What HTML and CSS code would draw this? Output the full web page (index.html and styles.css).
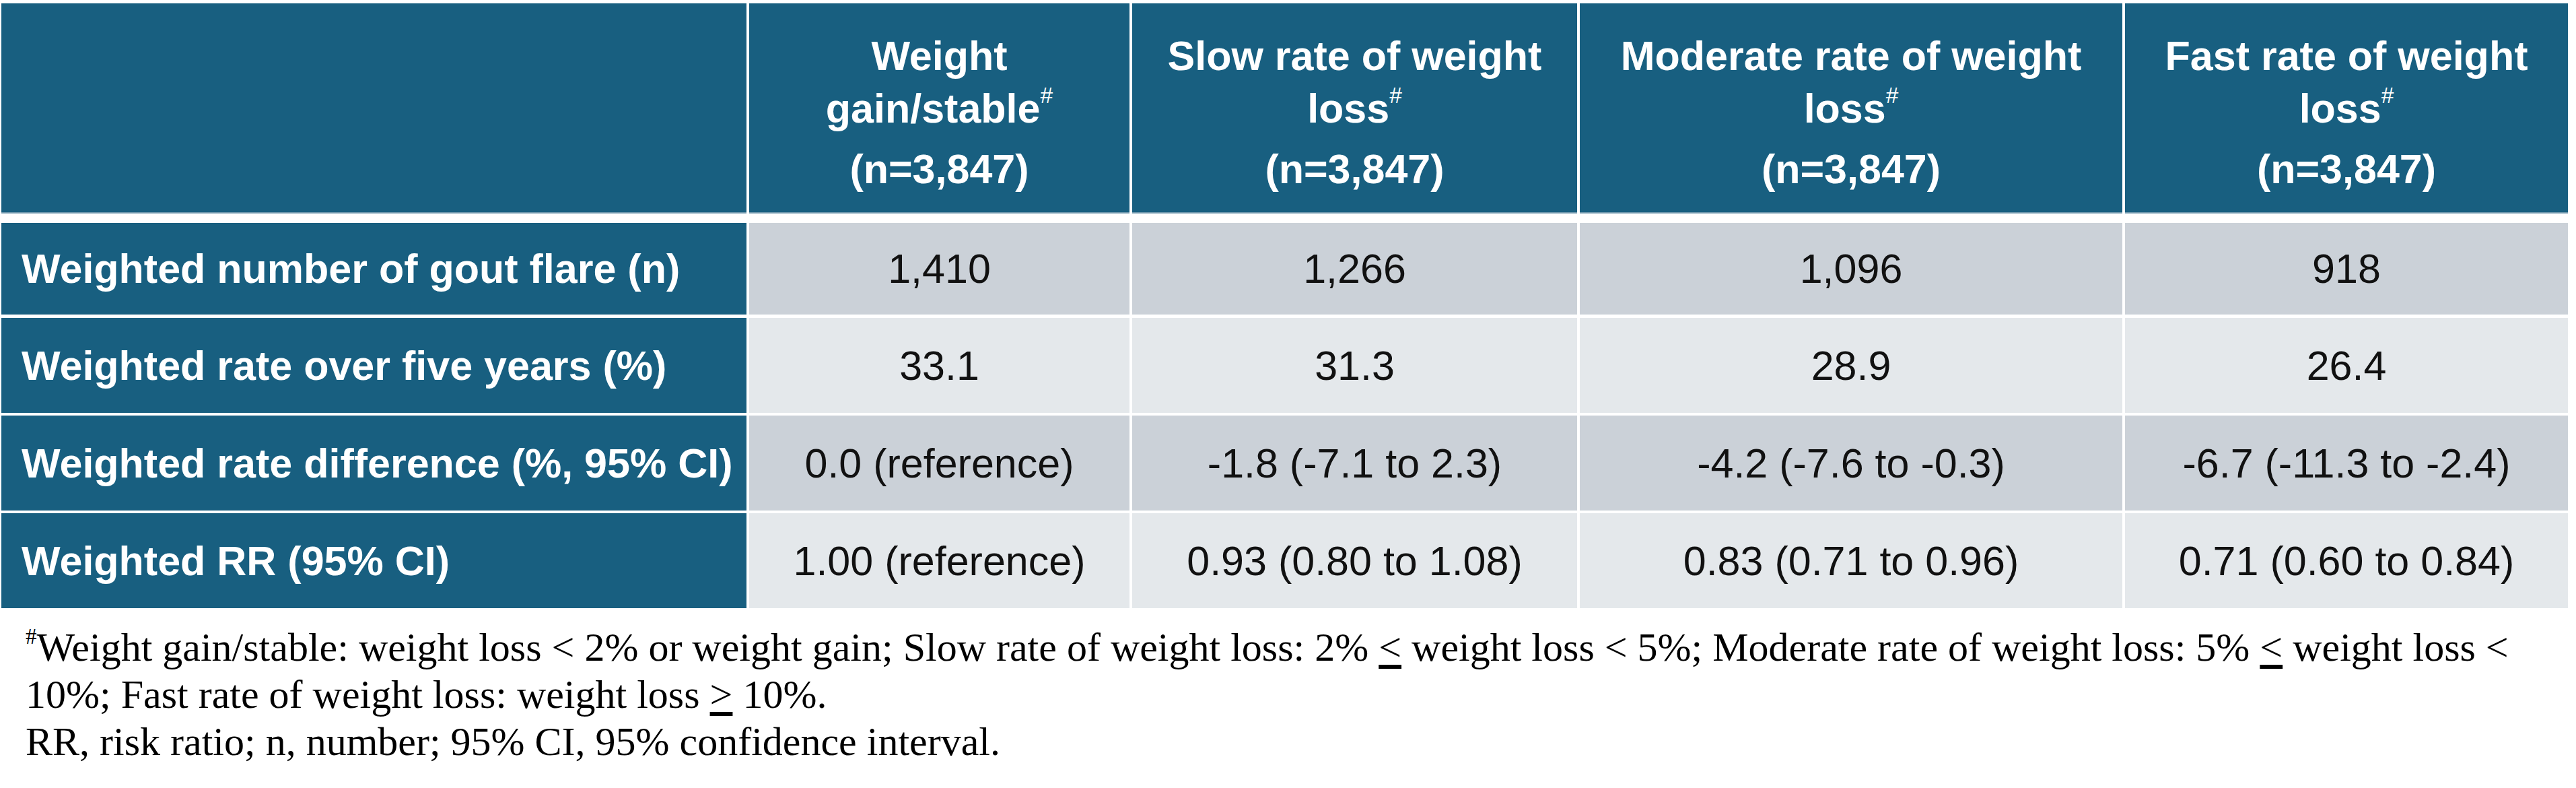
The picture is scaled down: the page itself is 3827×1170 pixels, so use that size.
FILE: index.html
```html
<!DOCTYPE html>
<html lang="en">
<head>
<meta charset="utf-8">
<title>Weighted gout flare by rate of weight loss</title>
<link rel="stylesheet" href="styles.css">
</head>
<body>
<div class="page">
  <div class="table">
    <div class="row head">
      <div class="cell hcell label-col"></div>
      <div class="cell hcell c2"><div class="htitle">Weight<br>gain/stable<sup>#</sup></div><div class="hn">(n=3,847)</div></div>
      <div class="cell hcell c3"><div class="htitle">Slow rate of weight<br>loss<sup>#</sup></div><div class="hn">(n=3,847)</div></div>
      <div class="cell hcell c4"><div class="htitle">Moderate rate of weight<br>loss<sup>#</sup></div><div class="hn">(n=3,847)</div></div>
      <div class="cell hcell c5"><div class="htitle">Fast rate of weight<br>loss<sup>#</sup></div><div class="hn">(n=3,847)</div></div>
    </div>
    <div class="row body dark first">
      <div class="cell label">Weighted number of gout flare (n)</div>
      <div class="cell val">1,410</div>
      <div class="cell val">1,266</div>
      <div class="cell val">1,096</div>
      <div class="cell val">918</div>
    </div>
    <div class="row body light">
      <div class="cell label">Weighted rate over five years (%)</div>
      <div class="cell val">33.1</div>
      <div class="cell val">31.3</div>
      <div class="cell val">28.9</div>
      <div class="cell val">26.4</div>
    </div>
    <div class="row body dark">
      <div class="cell label">Weighted rate difference (%, 95% CI)</div>
      <div class="cell val">0.0 (reference)</div>
      <div class="cell val">-1.8 (-7.1 to 2.3)</div>
      <div class="cell val">-4.2 (-7.6 to -0.3)</div>
      <div class="cell val">-6.7 (-11.3 to -2.4)</div>
    </div>
    <div class="row body light">
      <div class="cell label">Weighted RR (95% CI)</div>
      <div class="cell val">1.00 (reference)</div>
      <div class="cell val">0.93 (0.80 to 1.08)</div>
      <div class="cell val">0.83 (0.71 to 0.96)</div>
      <div class="cell val">0.71 (0.60 to 0.84)</div>
    </div>
  </div>
  <div class="notes">
    <p><sup class="nsup">#</sup>Weight gain/stable: weight loss &lt; 2% or weight gain; Slow rate of weight loss: 2% <span class="ul">&lt;</span> weight loss &lt; 5%; Moderate rate of weight loss: 5% <span class="ul">&lt;</span> weight loss &lt; 10%; Fast rate of weight loss: weight loss <span class="ul">&gt;</span> 10%.</p>
    <p>RR, risk ratio; n, number; 95% CI, 95% confidence interval.</p>
  </div>
</div>
</body>
</html>
```

FILE: styles.css
```css
html, body {
  margin: 0;
  padding: 0;
  background: #ffffff;
}

.page {
  padding: 5px 0 0 2px;
  width: 3813px;
}

.table {
  display: flex;
  flex-direction: column;
  font-family: "Liberation Sans", Arial, sans-serif;
  font-size: 61px;
}

.row {
  display: grid;
  grid-template-columns: 1107px 565px 661px 806px 658px;
  column-gap: 4px;
}

.row.head {
  height: 312px;
  margin-bottom: 14px;
}

.row.body {
  height: 141px;
  margin-bottom: 4px;
}

.row.body.first {
  height: 136px;
  margin-bottom: 5px;
}

.cell {
  display: flex;
  align-items: center;
}

.hcell {
  background: #185f80;
  color: #ffffff;
  font-weight: bold;
  flex-direction: column;
  align-items: center;
  justify-content: flex-start;
  text-align: center;
  padding-top: 39px;
  box-sizing: border-box;
  box-shadow: inset 0 -2px 0 #6f98ad;
}

.htitle {
  line-height: 78px;
}

.hn {
  line-height: 78px;
  margin-top: 12px;
}

.hcell sup,
.nsup {
  font-size: 0.55em;
  font-weight: normal;
  vertical-align: 0;
  position: relative;
  top: -0.85em;
  line-height: 0;
}

.label {
  background: #185f80;
  color: #ffffff;
  font-weight: bold;
  padding-left: 30px;
}

.val {
  justify-content: center;
  color: #111111;
}

.dark .val {
  background: #cbd1d8;
}

.light .val {
  background: #e4e8eb;
}

.notes {
  margin-top: 19px;
  padding-left: 36px;
  font-family: "Liberation Serif", "Times New Roman", serif;
  font-size: 60px;
  line-height: 70px;
  color: #000000;
}

.notes p {
  margin: 0;
}

.nsup {
  font-size: 0.55em;
  top: -0.75em;
}

.ul {
  text-decoration: underline;
  text-underline-offset: 6px;
}
```
